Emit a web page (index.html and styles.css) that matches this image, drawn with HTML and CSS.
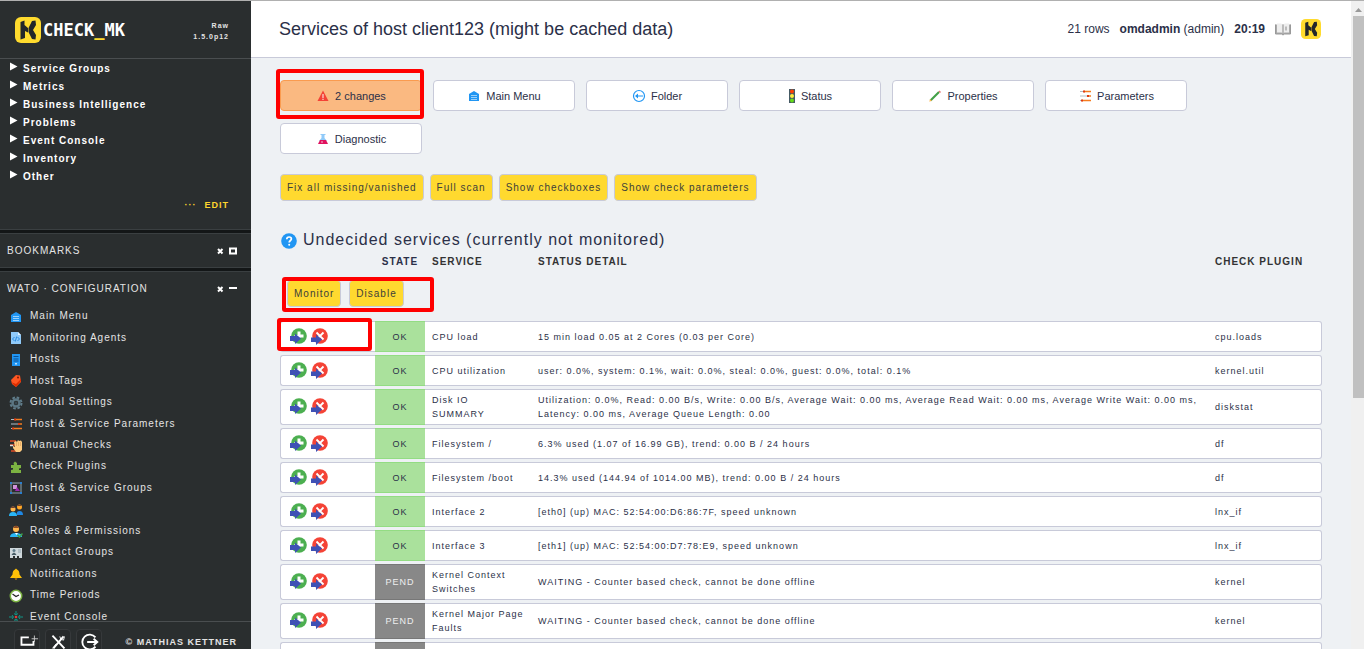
FILE: index.html
```
<!DOCTYPE html>
<html lang="en">
<head>
<meta charset="utf-8">
<title>Services of host client123</title>
<link rel="stylesheet" href="styles.css">
</head>
<body>
<svg class="sprite" aria-hidden="true">
  <symbol id="mk" viewBox="0 0 26 26"><rect width="26" height="26" rx="6" fill="#ffdb2e"/><path d="M5.500 5l4-1.500V8l3.500 3v4.500L10 14v7l-4.500 1.500z" fill="#22262a"/><path d="M17 4l3.500-.500.500 4.500-3 5 3 5-.500 4.500L17 22l-3.500-7v-4z" fill="#22262a"/></symbol>
  <symbol id="tri" viewBox="0 0 8 9"><path d="M0 0.500v8L7.500 4.500z" fill="#fff"/></symbol>
  <symbol id="menu" viewBox="-1 -1 14 14"><path d="M1 4l5-3 5 3v7H1z" fill="#2196f3"/><path d="M3 5.500h6M3 7.500h6M3 9.500h6" stroke="#9bd0fa"/></symbol>
  <symbol id="agents" viewBox="0 0 12 14"><path d="M1 1h7l3 3v9H1z" fill="#90caf9"/><path d="M8 1v3h3z" fill="#e3f2fd"/><path d="M4.500 6L2.500 8l2 2M7.500 6l2 2-2 2M6.700 5.500l-1.400 5" stroke="#2789e0" fill="none"/></symbol>
  <symbol id="hosts" viewBox="0 0 12 14"><rect x="2" y="1" width="8" height="12" fill="#2196f3"/><path d="M3.500 3.500h5M3.500 6h5M3.500 8h5" stroke="#0b4f93"/><rect x="5" y="10" width="2" height="1.500" fill="#bbdefb"/></symbol>
  <symbol id="tag" viewBox="0 0 12 14"><path d="M1 6l5-5 4 .500L11 8l-5 5-4-3z" fill="#ff5722"/><path d="M1 8l5 5 5-6v-2l-5 5z" fill="#dd2c00"/><circle cx="8" cy="3.500" r="1" fill="#7b1b06"/></symbol>
  <symbol id="gear" viewBox="0 0 14 14"><circle cx="7" cy="7" r="5.500" fill="none" stroke="#607d8b" stroke-width="2" stroke-dasharray="2.600 1.720"/><circle cx="7" cy="7" r="3.500" fill="none" stroke="#5b7683" stroke-width="2.500"/><circle cx="7" cy="7" r="1.500" fill="#37474f"/></symbol>
  <symbol id="params" viewBox="-1 -1 14 14"><path d="M1 1.500h5M1 6h8M1 10.500h2" stroke="#b0bec5"/><path d="M5 1.500h7M8 6h4M3 10.500h9" stroke="#f57c1f" stroke-width="1.500"/><path d="M4 .500h2v2H4zM8 5h2v2H8zM2 9.500h2v2H2z" fill="#dd3a12"/></symbol>
  <symbol id="manual" viewBox="0 0 14 14"><path d="M1 2h6M1 6h5M2 12h6" stroke="#dd4b25" stroke-width="1.500"/><path d="M1 6.500h3" stroke="#ddd" stroke-width="1.500"/><path d="M5 3l2-1 1 1 1-2 1 1 2-.500L13 3v8l-2 2H7L4 9V7l2 1z" fill="#ffcc80"/><path d="M7.500 3v4M9.500 3v4M11.500 3v4" stroke="#d99b5b" stroke-width=".6"/></symbol>
  <symbol id="plugin" viewBox="-1 -1 14 14"><path d="M1 4h3l-.500-2L5 .500 7 2v2h4v3l-2 .500V9h2v3H1V9l2-.500V7H1z" fill="#7cb342"/></symbol>
  <symbol id="groups" viewBox="0 0 14 14"><rect x="2" y="2" width="10" height="10" fill="none" stroke="#90a4ae"/><path d="M1 1h2v2H1zM11 1h2v2h-2zM1 11h2v2H1zM11 11h2v2h-2z" fill="#2a7fd0"/><path d="M4 4h4v4H4z" fill="#ce93d8"/><path d="M8 6l3 4H6z" fill="#9c27b0"/></symbol>
  <symbol id="users" viewBox="0 0 14 14"><circle cx="4" cy="6" r="2.500" fill="#ffb74d"/><path d="M0 13q0-4 4-4t4 4z" fill="#29b6f6"/><circle cx="10.500" cy="4" r="2.500" fill="#ffa726"/><path d="M8 12q-1-4 2.500-4T14 12z" fill="#1e88e5"/><path d="M1.500 5q2-3.500 5 0zM8 3q2-3 5 0z" fill="#6d4032"/></symbol>
  <symbol id="roles" viewBox="0 0 14 14"><circle cx="7" cy="5" r="3" fill="#ffb74d"/><path d="M4 4q3-5 6 0z" fill="#8d4b25"/><path d="M1 13q0-4 6-4t6 4z" fill="#29b6f6"/><path d="M6 9l1.500 2L9 9z" fill="#fff"/><path d="M8.500 11l2 2 3-3.500" stroke="#43a047" stroke-width="1.500" fill="none"/></symbol>
  <symbol id="contact" viewBox="0 0 14 12"><path d="M1 1h12v10h-3V9H8v2H6V9H4v2H1z" fill="#cfd8dc"/><circle cx="5" cy="3.500" r="1.500" fill="#607d8b"/><path d="M2.500 8q2.500-5 5 0z" fill="#455a64"/><path d="M9 3h3M9 5h3" stroke="#90a4ae"/></symbol>
  <symbol id="bell" viewBox="-1 -1 14 14"><path d="M6 .500l1 1q2.500 1 2.500 5L12 10H0l2.500-3.500q0-4 2.500-5z" fill="#ffc107"/><path d="M4.500 10.500h3L6 12z" fill="#e69a00"/></symbol>
  <symbol id="clock" viewBox="0 0 14 14"><circle cx="7" cy="7" r="5.700" fill="#fff" stroke="#7cb342" stroke-width="1.500"/><path d="M3.500 5L7 7.500 10 6" stroke="#222" stroke-width="1.200" fill="none"/></symbol>
  <symbol id="events" viewBox="0 0 14 12"><path d="M7 0v4M7 8v4M0 6h4M10 6h4M5 2.500l2 1.500 2-1.500M5 9.500L7 8l2 1.500M3 4l1.500 2L3 8M11 4L9.500 6 11 8" stroke="#119486" fill="none"/><circle cx="7" cy="6" r="1.300" fill="#e53935"/></symbol>
  <symbol id="warn" viewBox="-1 -1 14 14"><path d="M6 .500L11.500 11H.500z" fill="#f44336"/><path d="M6 4v4M6 8.700v1.300" stroke="#fbd0c8" stroke-width="1.300"/></symbol>
  <symbol id="folder" viewBox="0 0 14 14"><circle cx="7" cy="7" r="5.500" fill="none" stroke="#2196f3" stroke-width="1.200"/><path d="M3 7l3-2.500v2h5v1H6v2z" fill="#2196f3"/></symbol>
  <symbol id="lights" viewBox="0 0 8 16"><rect x="1" y="1" width="6" height="14" fill="#455a64"/><circle cx="4" cy="3.500" r="2" fill="#ff3d00"/><circle cx="4" cy="8" r="2" fill="#ffeb3b"/><circle cx="4" cy="12.500" r="2" fill="#64dd17"/></symbol>
  <symbol id="pencil" viewBox="-1 -1 14 14"><path d="M1.500 10.500L10 2" stroke="#43a047" stroke-width="2.200"/><path d="M9.500 1.500l1-1 1.500 1.500-1 1z" fill="#e57373"/><path d="M.300 11.700L1 9l1.800 1.800z" fill="#ffb74d"/></symbol>
  <symbol id="flask" viewBox="-1 -1 14 14"><path d="M3.500 1h5v1h-1v3L10 8H2l2.500-3V2h-1z" fill="#90caf9"/><path d="M3 7h6l2 4H1z" fill="#e0125e"/><circle cx="5" cy="9" r=".700" fill="#fff"/></symbol>
  <symbol id="book" viewBox="0 0 16 13"><path d="M.500 1.500v9.500h6L8 12l1.500-1h6V1.500" fill="#aaa" stroke="#999"/><path d="M2 .500h4L8 1.500 10 .500h4v9h-4.500L8 10.500 6.500 9.500H2z" fill="#eee"/><path d="M8 1.500v9M11 3.500v4" stroke="#888"/></symbol>
  <symbol id="help" viewBox="0 0 16 16"><circle cx="8" cy="8" r="7.800" fill="#2196f3"/><path d="M5.800 6.200q0-2.200 2.300-2.200t2.300 2c0 1.500-2.200 1.500-2.200 3.500" fill="none" stroke="#fff" stroke-width="1.700"/><circle cx="8.200" cy="11.800" r="1" fill="#fff"/></symbol>
  <symbol id="add" viewBox="0 0 18 18"><circle cx="10" cy="8" r="7.800" fill="#4caf50"/><path d="M8.500 3.500h3v3h3v3h-3l-2 2L5 7h3.500z" fill="#fff"/><path d="M1 8h5V5.500l6 5L6 16v-3H1z" fill="#3f51b5"/></symbol>
  <symbol id="drop" viewBox="0 0 18 18"><circle cx="10" cy="8" r="7.800" fill="#f44336"/><path d="M6.500 4.500l7 7M13.500 4.500l-7 7" stroke="#fff" stroke-width="1.800"/><path d="M1 9.500h5v-3l6 5L6 17v-3H1z" fill="#3f51b5"/></symbol>
</svg>

<div class="app">
  <aside class="side">
    <header class="side-head">
      <svg class="logo" aria-hidden="true"><use href="#mk"/></svg>
      <span class="brand">CHECK<span class="accent">_</span>MK</span>
      <span class="version">Raw<br>1.5.0p12</span>
    </header>
    <div class="side-body">
      <section class="snapin views">
        <ul class="folds">
          <li><svg><use href="#tri"/></svg>Service Groups</li>
          <li><svg><use href="#tri"/></svg>Metrics</li>
          <li><svg><use href="#tri"/></svg>Business Intelligence</li>
          <li><svg><use href="#tri"/></svg>Problems</li>
          <li><svg><use href="#tri"/></svg>Event Console</li>
          <li><svg><use href="#tri"/></svg>Inventory</li>
          <li><svg><use href="#tri"/></svg>Other</li>
        </ul>
        <p class="edit"><span>···</span><a href="#edit">EDIT</a></p>
      </section>
      <section class="snapin">
        <h2 class="snap-title">BOOKMARKS
          <span class="tools"><button aria-label="Remove"><svg class="tool" viewBox="0 0 8 8"><path d="M2 2l4.500 4.500M6.500 2L2 6.500" stroke="#fff" stroke-width="2"/></svg></button><button aria-label="Expand"><svg class="tool" viewBox="0 0 8 8"><path d="M1 1.500h6v5H1z" fill="none" stroke="#fff" stroke-width="2"/></svg></button></span></h2>
      </section>
      <section class="snapin">
        <h2 class="snap-title">WATO · CONFIGURATION
          <span class="tools"><button aria-label="Remove"><svg class="tool" viewBox="0 0 8 8"><path d="M2 2l4.500 4.500M6.500 2L2 6.500" stroke="#fff" stroke-width="2"/></svg></button><button aria-label="Collapse"><svg class="tool" viewBox="0 0 8 8"><path d="M0 3h8" stroke="#fff" stroke-width="2"/></svg></button></span></h2>
        <nav class="links">
          <a href="#menu"><svg><use href="#menu"/></svg>Main Menu</a>
          <a href="#agents"><svg><use href="#agents"/></svg>Monitoring Agents</a>
          <a href="#hosts"><svg><use href="#hosts"/></svg>Hosts</a>
          <a href="#tag"><svg><use href="#tag"/></svg>Host Tags</a>
          <a href="#gear"><svg><use href="#gear"/></svg>Global Settings</a>
          <a href="#params"><svg><use href="#params"/></svg>Host &amp; Service Parameters</a>
          <a href="#manual"><svg><use href="#manual"/></svg>Manual Checks</a>
          <a href="#plugin"><svg><use href="#plugin"/></svg>Check Plugins</a>
          <a href="#groups"><svg><use href="#groups"/></svg>Host &amp; Service Groups</a>
          <a href="#users"><svg><use href="#users"/></svg>Users</a>
          <a href="#roles"><svg><use href="#roles"/></svg>Roles &amp; Permissions</a>
          <a href="#contact"><svg><use href="#contact"/></svg>Contact Groups</a>
          <a href="#bell"><svg><use href="#bell"/></svg>Notifications</a>
          <a href="#clock"><svg><use href="#clock"/></svg>Time Periods</a>
          <a href="#events"><svg><use href="#events"/></svg>Event Console</a>
        </nav>
      </section>
    </div>
    <footer class="side-foot">
      <button class="foot-btn" aria-label="Add snapin"><svg viewBox="0 0 26 26"><path d="M15 8H7v8h13v-4" fill="none" stroke="#fff" stroke-width="2"/><path d="M21 6v7M18 9.500h7" stroke="#ccc"/></svg></button>
      <button class="foot-btn" aria-label="Edit profile"><svg viewBox="0 0 26 26"><path d="M7 6l13 14M19 7L8 20" stroke="#fff" stroke-width="2"/><path d="M15 7q0 4 4 4l1-4M11 15l-4 5" stroke="#fff" fill="none"/></svg></button>
      <button class="foot-btn" aria-label="Log out"><svg viewBox="0 0 26 26"><path d="M20 8a8 8 0 1 0 0 10M11 13h11M18 9.500l4 3.500-4 3.500" stroke="#fff" stroke-width="2" fill="none"/></svg></button>
      <span class="copy">© MATHIAS KETTNER</span>
    </footer>
  </aside>

  <main class="main">
    <header class="top">
      <h1>Services of host client123 (might be cached data)</h1>
      <div class="status"><span>21 rows</span><span><b>omdadmin</b> (admin)</span><b>20:19</b>
        <svg class="book" aria-hidden="true"><use href="#book"/></svg><svg class="mini" aria-hidden="true"><use href="#mk"/></svg></div>
    </header>
    <div class="content">
      <nav class="ctx">
        <a class="hot marked mark-ctx" href="#changes"><svg><use href="#warn"/></svg>2 changes</a>
        <a href="#menu"><svg><use href="#menu"/></svg>Main Menu</a>
        <a href="#folder"><svg><use href="#folder"/></svg>Folder</a>
        <a href="#status"><svg class="tall"><use href="#lights"/></svg>Status</a>
        <a href="#props"><svg><use href="#pencil"/></svg>Properties</a>
        <a href="#params"><svg><use href="#params"/></svg>Parameters</a>
        <a href="#diag"><svg><use href="#flask"/></svg>Diagnostic</a>
      </nav>
      <div class="actions">
        <button class="btn">Fix all missing/vanished</button>
        <button class="btn">Full scan</button>
        <button class="btn">Show checkboxes</button>
        <button class="btn">Show check parameters</button>
      </div>
      <h2 class="group"><svg aria-hidden="true"><use href="#help"/></svg>Undecided services (currently not monitored)</h2>
      <table class="services">
        <colgroup><col class="c-icons"><col class="c-state"><col class="c-service"><col><col class="c-plugin"></colgroup>
        <thead>
          <tr><th></th><th class="mid">STATE</th><th>SERVICE</th><th>STATUS DETAIL</th><th>CHECK PLUGIN</th></tr>
          <tr><td colspan="5" class="bulk"><div class="bulk-box marked mark-bulk"><button class="btn">Monitor</button><button class="btn">Disable</button></div></td></tr>
        </thead>
        <tbody>
          <tr><td class="marked mark-icons"><svg><use href="#add"/></svg><svg><use href="#drop"/></svg></td><td class="ok">OK</td><td>CPU load</td><td>15 min load 0.05 at 2 Cores (0.03 per Core)</td><td>cpu.loads</td></tr>
          <tr><td><svg><use href="#add"/></svg><svg><use href="#drop"/></svg></td><td class="ok">OK</td><td>CPU utilization</td><td>user: 0.0%, system: 0.1%, wait: 0.0%, steal: 0.0%, guest: 0.0%, total: 0.1%</td><td>kernel.util</td></tr>
          <tr><td><svg><use href="#add"/></svg><svg><use href="#drop"/></svg></td><td class="ok">OK</td><td>Disk IO<br>SUMMARY</td><td>Utilization: 0.0%, Read: 0.00 B/s, Write: 0.00 B/s, Average Wait: 0.00 ms, Average Read Wait: 0.00 ms, Average Write Wait: 0.00 ms, Latency: 0.00 ms, Average Queue Length: 0.00</td><td>diskstat</td></tr>
          <tr><td><svg><use href="#add"/></svg><svg><use href="#drop"/></svg></td><td class="ok">OK</td><td>Filesystem /</td><td>6.3% used (1.07 of 16.99 GB), trend: 0.00 B / 24 hours</td><td>df</td></tr>
          <tr><td><svg><use href="#add"/></svg><svg><use href="#drop"/></svg></td><td class="ok">OK</td><td>Filesystem /boot</td><td>14.3% used (144.94 of 1014.00 MB), trend: 0.00 B / 24 hours</td><td>df</td></tr>
          <tr><td><svg><use href="#add"/></svg><svg><use href="#drop"/></svg></td><td class="ok">OK</td><td>Interface 2</td><td>[eth0] (up) MAC: 52:54:00:D6:86:7F, speed unknown</td><td>lnx_if</td></tr>
          <tr><td><svg><use href="#add"/></svg><svg><use href="#drop"/></svg></td><td class="ok">OK</td><td>Interface 3</td><td>[eth1] (up) MAC: 52:54:00:D7:78:E9, speed unknown</td><td>lnx_if</td></tr>
          <tr><td><svg><use href="#add"/></svg><svg><use href="#drop"/></svg></td><td class="pend">PEND</td><td>Kernel Context Switches</td><td>WAITING - Counter based check, cannot be done offline</td><td>kernel</td></tr>
          <tr><td><svg><use href="#add"/></svg><svg><use href="#drop"/></svg></td><td class="pend">PEND</td><td>Kernel Major Page Faults</td><td>WAITING - Counter based check, cannot be done offline</td><td>kernel</td></tr>
          <tr><td></td><td class="pend"></td><td></td><td></td><td></td></tr>
        </tbody>
      </table>
    </div>
  </main>
  <div class="scroll" aria-hidden="true"><svg viewBox="0 0 11 15"><path d="M2 11l3.500-4L9 11z" fill="#999"/></svg><div class="thumb"></div></div>
</div>
</body>
</html>
```
FILE: styles.css
```
* { box-sizing: border-box; }
body { margin: 0; font-family: "Liberation Sans", Arial, sans-serif; font-size: 10px; color: #2b3048; background: #eef1f4; overflow: hidden; }
h1, h2, p, ul { margin: 0; padding: 0; font-weight: normal; }
ul { list-style: none; }
a { color: inherit; text-decoration: none; }
button { font: inherit; color: inherit; cursor: pointer; }
.sprite { position: absolute; width: 0; height: 0; }

.app { display: grid; grid-template-columns: 251px 1fr 13px; height: 100vh; border-top: 1px solid #b0b0b0; }

/* Sidebar */
.side { display: flex; flex-direction: column; min-height: 0; background: #2a2e2f; color: #e4e4e4; letter-spacing: 1px; }
.side-head { display: flex; align-items: center; height: 58px; flex: none; padding: 0 22px 0 15px; border-bottom: 1px solid #4a4e50; }
.logo { width: 26px; height: 26px; }
.brand { margin-left: 2px; font: bold 17px "DejaVu Sans Mono", monospace; letter-spacing: 0; color: #fff; }
.accent { color: #ffdb2e; }
.version { margin-left: auto; padding-top: 2px; font-size: 7px; font-weight: bold; line-height: 11px; text-align: right; }
.side-body { flex: 1; min-height: 0; overflow: hidden; display: flex; flex-direction: column; gap: 3px; background: #131617; }
.snapin { flex: none; background: #2a2e2f; border: 1px solid #3a3f41; border-width: 1px 0; }
.views { border-top: 0; height: 171px; }
.folds { display: grid; grid-auto-rows: 1fr; height: 126px; font-size: 10px; font-weight: bold; }
.folds li { display: flex; align-items: center; gap: 5px; padding-left: 10px; color: #fff; }
.folds svg { width: 8px; height: 9px; margin-bottom: 3px; }
.edit { display: flex; justify-content: flex-end; gap: 8px; padding: 15px 22px 0 0; font-size: 9px; font-weight: bold; color: #ffd52e; }
.snap-title { display: flex; align-items: center; justify-content: space-between; height: 33px; padding: 0 14px 0 7px; font-size: 10px; }
.tools { display: flex; gap: 5px; }
.tools button { display: flex; padding: 0; border: 0; background: none; }
.tool { width: 8px; height: 8px; }
.links { display: grid; grid-auto-rows: 1fr; height: 322px; }
.links a { display: flex; align-items: center; gap: 7px; padding-left: 9px; }
.links svg { width: 14px; height: 14px; margin-top: 2px; }
.side-foot { display: flex; align-items: flex-start; gap: 5px; flex: none; height: 28px; padding: 7px 14px 0; overflow: hidden; border-top: 1px solid #4a4e50; }
.foot-btn { width: 26px; height: 26px; padding: 0; border: 1px solid #36393b; border-radius: 4px; background: #272a2b; }
.foot-btn svg { display: block; width: 24px; height: 24px; }
.copy { margin-left: auto; padding-top: 8px; font-size: 9px; font-weight: bold; white-space: nowrap; }

/* Page header */
.main { min-width: 0; overflow: hidden; }
.top { display: flex; align-items: center; justify-content: space-between; height: 57px; padding: 0 30px 0 28px; background: #fff; border-bottom: 1px solid #c8cad9; }
h1 { font-size: 18px; }
.status { display: flex; align-items: center; gap: 10px; font-size: 12px; }
.book { width: 16px; height: 13px; }
.mini { width: 20px; height: 20px; }

/* Content */
.content { padding: 22px 29px 0; }
.ctx { display: flex; flex-wrap: wrap; gap: 12px 11px; }
.ctx a { display: flex; align-items: center; justify-content: center; gap: 5px; width: 142px; height: 31px; font-size: 11px; background: #fff; border: 1px solid #c8cad9; border-radius: 4px; }
.ctx svg { width: 14px; height: 14px; }
.ctx .tall { width: 8px; height: 16px; }
.ctx .hot { background: #fab981; border-color: #fa9b4f; }
.actions { display: flex; gap: 6px; margin-top: 20px; }
.btn { height: 27px; padding: 0 6px; border: 1px solid #c8cad9; border-radius: 4px; background: #ffd92f; color: #40403a; letter-spacing: 1px; white-space: nowrap; }
.group { display: flex; align-items: center; gap: 6px; margin-top: 29px; font-size: 16px; line-height: 20px; letter-spacing: 1px; }
.group svg { width: 16px; height: 16px; margin: 2px 0 0 1px; }

.services { width: 100%; margin-top: 2px; table-layout: fixed; border-collapse: separate; border-spacing: 0 3px; line-height: 14px; }
.c-icons { width: 95px; }
.c-state { width: 50px; }
.c-service { width: 106px; }
.c-plugin { width: 114px; }
th { padding: 0 7px; text-align: left; letter-spacing: 1px; color: #333; }
.services .mid { padding: 0; text-align: center; color: #2b3048; }
.services .bulk { padding: 8px 7px 11px; line-height: 0; }
.bulk-box { display: inline-flex; gap: 8px; line-height: 14px; }
tbody { font-size: 9px; letter-spacing: 1px; }
tbody td { height: 31px; padding: 3px 7px; border: 1px solid #c8cad9; border-width: 1px 0; background: #fff; }
tbody td:nth-child(3) { padding-right: 2px; }
tbody td:first-child { padding: 0 8px; border-left-width: 1px; border-radius: 3px 0 0 3px; }
tbody td:last-child { border-right-width: 1px; border-radius: 0 3px 3px 0; }
tbody svg { width: 18px; height: 18px; margin-right: 3px; vertical-align: middle; }
tbody .ok, tbody .pend { padding: 0; text-align: center; }
tbody .ok { background: #aae19c; border-color: #93dc83; }
tbody .pend { background: #888; border-color: #777; color: #eee; }

/* Highlight frames */
.marked { position: relative; }
.marked::after { content: ""; position: absolute; z-index: 1; border: 4px solid #f00; border-radius: 3px; pointer-events: none; }
.mark-ctx::after { inset: -12px -3px -9px -5px; }
.mark-bulk::after { inset: -3px -30px -5px -5px; }
.mark-icons::after { inset: -4px 3px 0 -4px; }

/* Scroll bar */
.scroll { padding-left: 2px; background: #f0f0f0; }
.scroll svg { display: block; width: 11px; height: 15px; }
.thumb { height: 59%; background: #c0c0c0; }
```
